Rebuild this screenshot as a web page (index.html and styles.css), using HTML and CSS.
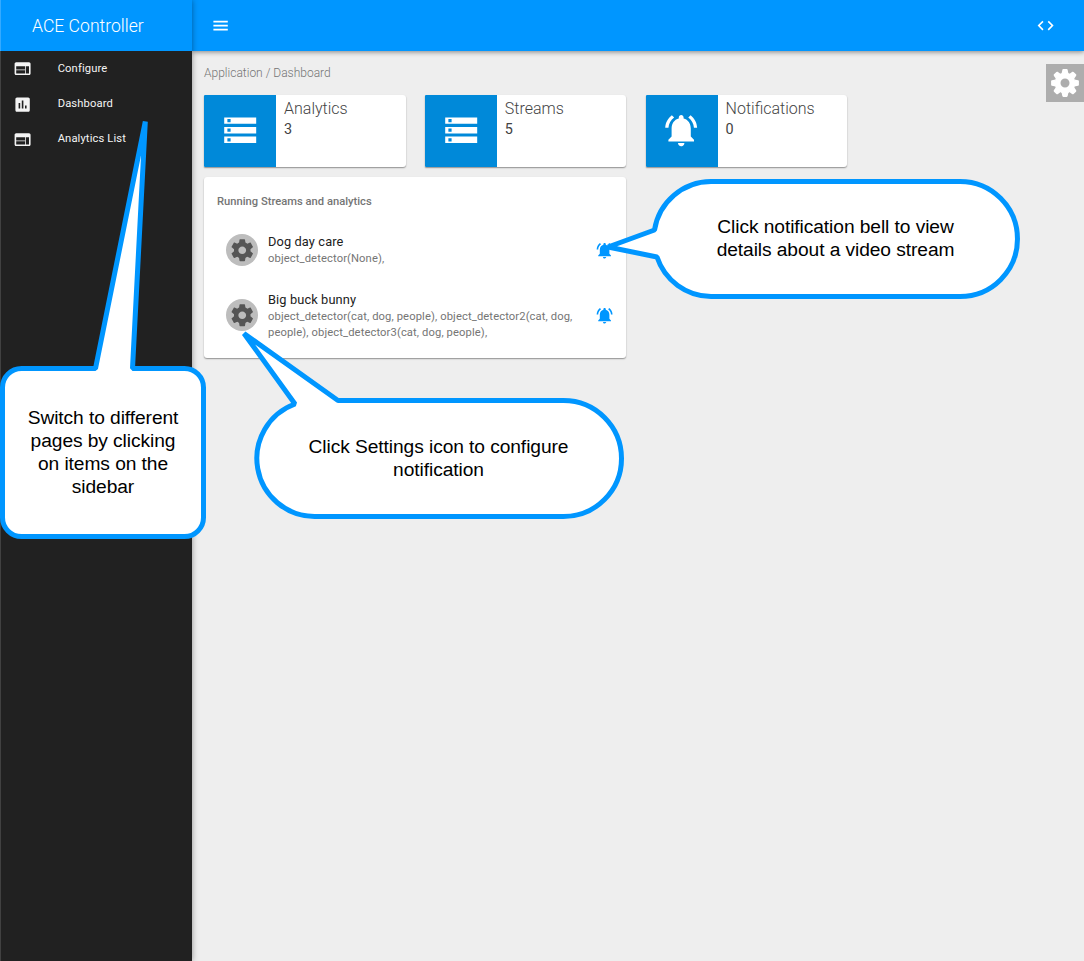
FILE: index.html
```
<!DOCTYPE html>
<html lang="en">
<head>
<meta charset="utf-8">
<title>ACE Controller</title>
<link rel="stylesheet" href="styles.css">
</head>
<body>
<svg class="defs" aria-hidden="true">
  <symbol id="web" viewBox="0 0 24 24"><path d="M20 4H4c-1.1 0-1.99.9-1.99 2L2 18c0 1.1.9 2 2 2h16c1.1 0 2-.9 2-2V6c0-1.100-.9-2-2-2zm-5 14H4v-4h11v4zm0-5H4V9h11v4zm5 5h-4V9h4v9z"/></symbol>
  <symbol id="chart" viewBox="0 0 24 24"><path d="M19 3H5c-1.100 0-2 .9-2 2v14c0 1.100.9 2 2 2h14c1.100 0 2-.9 2-2V5c0-1.100-.9-2-2-2zM9 17H7v-7h2v7zm4 0h-2V7h2v10zm4 0h-2v-4h2v4z"/></symbol>
  <symbol id="menu" viewBox="0 0 24 24"><path d="M3 18h18v-2H3v2zm0-5h18v-2H3v2zm0-7v2h18V6H3z"/></symbol>
  <symbol id="code" viewBox="0 0 24 24"><path d="M9.400 16.600 4.800 12l4.600-4.600L8 6l-6 6 6 6 1.400-1.400zm5.200 0 4.600-4.600-4.600-4.600L16 6l6 6-6 6-1.400-1.400z"/></symbol>
  <symbol id="storage" viewBox="0 0 24 24"><path d="M2 20h20v-4H2v4zm2-3h2v2H4v-2zM2 4v4h20V4H2zm4 3H4V5h2v2zm-4 7h20v-4H2v4zm2-3h2v2H4v-2z"/></symbol>
  <symbol id="bell" viewBox="0 0 24 24"><path d="M7.580 4.080 6.150 2.650C3.750 4.480 2.170 7.300 2.030 10.500h2c.15-2.650 1.510-4.970 3.550-6.420zm12.390 6.420h2c-.15-3.200-1.730-6.020-4.120-7.850l-1.420 1.430c2.020 1.450 3.390 3.770 3.540 6.420zM18 11c0-3.070-1.640-5.640-4.500-6.320V4c0-.83-.67-1.500-1.500-1.500s-1.500.67-1.500 1.500v.68C7.630 5.360 6 7.920 6 11v5l-2 2v1h16v-1l-2-2v-5zm-6 11c.14 0 .27-.01.4-.04.65-.14 1.180-.58 1.440-1.180.1-.24.15-.5.15-.78h-4c.01 1.100.9 2 2.010 2z"/></symbol>
  <symbol id="cog" viewBox="0 0 24 24"><path d="M19.430 12.980c.04-.32.07-.64.07-.98s-.03-.66-.07-.98l2.110-1.650c.19-.15.24-.42.12-.64l-2-3.460c-.12-.22-.39-.3-.61-.22l-2.490 1c-.52-.4-1.080-.73-1.690-.98l-.38-2.650C14.460 2.180 14.250 2 14 2h-4c-.25 0-.46.18-.49.42l-.38 2.650c-.61.25-1.170.59-1.690.98l-2.490-1c-.23-.09-.49 0-.61.22l-2 3.460c-.13.22-.07.49.12.64l2.110 1.650c-.04.32-.07.65-.07.98s.03.66.07.98l-2.110 1.650c-.19.15-.24.42-.12.64l2 3.460c.12.22.39.3.61.22l2.490-1c.52.4 1.080.73 1.690.98l.38 2.650c.03.24.24.42.49.42h4c.25 0 .46-.18.49-.42l.38-2.650c.61-.25 1.170-.59 1.690-.98l2.490 1c.23.09.49 0 .61-.22l2-3.460c.12-.22.07-.49-.12-.64l-2.110-1.650zM12 15.500c-1.930 0-3.500-1.570-3.500-3.500s1.570-3.500 3.500-3.500 3.500 1.570 3.500 3.500-1.570 3.500-3.500 3.500z"/></symbol>
  <symbol id="gear" viewBox="-14 -14 28 28">
    <circle r="7.450" fill="none" stroke="currentColor" stroke-width="5.900"/>
    <g id="teeth">
      <path id="tooth" d="M-3.400-9.500-2.700-13.100Q-2.500-13.900-1.700-13.900H1.700Q2.500-13.900 2.700-13.100L3.400-9.500z"/>
      <use href="#tooth" transform="rotate(45)"/><use href="#tooth" transform="rotate(90)"/><use href="#tooth" transform="rotate(135)"/>
      <use href="#tooth" transform="rotate(180)"/><use href="#tooth" transform="rotate(225)"/><use href="#tooth" transform="rotate(270)"/><use href="#tooth" transform="rotate(315)"/>
    </g>
  </symbol>
</svg>

<div class="app">
  <aside class="sidebar">
    <div class="brand"><span>ACE Controller</span></div>
    <nav class="nav">
      <a class="nav-item"><svg><use href="#web"/></svg><span>Configure</span></a>
      <a class="nav-item"><svg><use href="#chart"/></svg><span>Dashboard</span></a>
      <a class="nav-item"><svg><use href="#web"/></svg><span>Analytics List</span></a>
    </nav>
  </aside>
  <div class="page">
    <header class="toolbar">
      <svg class="icon-menu"><use href="#menu"/></svg>
      <svg class="icon-code"><use href="#code"/></svg>
    </header>
    <main class="content">
      <div class="crumb"><span>Application / Dashboard</span></div>
      <section class="stats">
        <article class="stat"><div class="tile"><svg><use href="#storage"/></svg></div><div class="stat-body"><h2><span>Analytics</span></h2><p>3</p></div></article>
        <article class="stat"><div class="tile"><svg><use href="#storage"/></svg></div><div class="stat-body"><h2><span>Streams</span></h2><p>5</p></div></article>
        <article class="stat"><div class="tile"><svg><use href="#bell"/></svg></div><div class="stat-body"><h2><span>Notifications</span></h2><p>0</p></div></article>
      </section>
      <section class="streams">
        <h3><span>Running Streams and analytics</span></h3>
        <div class="stream one">
          <div class="avatar"><svg><use href="#cog"/></svg></div>
          <div class="stream-text"><h4><span>Dog day care</span></h4><p><span>object_detector(None),</span></p></div>
          <svg class="alert"><use href="#bell"/></svg>
        </div>
        <div class="stream two">
          <div class="avatar"><svg><use href="#cog"/></svg></div>
          <div class="stream-text"><h4><span>Big buck bunny</span></h4><p><span>object_detector(cat, dog, people), object_detector2(cat, dog,</span><br><span>people), object_detector3(cat, dog, people),</span></p></div>
          <svg class="alert"><use href="#bell"/></svg>
        </div>
      </section>
    </main>
  </div>
</div>

<div class="settings"><svg><use href="#gear"/></svg></div>
<i class="speck"></i>

<svg class="callouts" viewBox="0 0 1084 961">
  <path d="M21.500 368.500H95.500L145.300 121.500 132.500 368.500H184.500A19 19 0 0 1 203.500 387.500V517.500A19 19 0 0 1 184.500 536.500H21.500A19 19 0 0 1 2.500 517.500V387.500A19 19 0 0 1 21.500 368.500Z"/>
  <path d="M295 404 244 333.500 338 400.500H563.500A58 58 0 0 1 563.500 516.500H314.500A58 58 0 0 1 295 404Z"/>
  <path d="M654.500 230 608 247 657 257A57.500 57.500 0 0 0 711 296.500H960A57.500 57.500 0 0 0 960 181.500H711A57.500 57.500 0 0 0 654.500 230Z"/>
</svg>
<p class="note note-sidebar">Switch to different<br>pages by clicking<br>on items on the<br>sidebar</p>
<p class="note note-settings">Click Settings icon to configure<br>notification</p>
<p class="note note-bell">Click notification bell to view<br>details about a video stream</p>
</body>
</html>
```
FILE: styles.css
```
* { box-sizing: border-box; }
body { margin: 0; font-family: Roboto, sans-serif; background: #eee; overflow: hidden; }
h2, h3, h4, p { margin: 0; font-weight: 400; }
svg { display: block; fill: currentColor; flex: none; }
.defs { position: absolute; width: 0; height: 0; }
.app { display: flex; height: 961px; }
.sidebar { width: 192px; background: #212121; color: #fff; border-left: 1px solid #414141; box-shadow: 0 0 6px rgba(0,0,0,.4); z-index: 2; flex: none; }
.brand { height: 51px; margin-left: -1px; border-left: 1px solid #35aaff; background: #0096ff; display: flex; align-items: center; padding-left: 31px; font-size: 17.6px; font-weight: 300; }
.nav { display: flex; flex-direction: column; }
.nav-item { height: 35px; display: flex; align-items: center; padding-left: 12px; gap: 25.500px; font-size: 11.2px; letter-spacing: .12px; color: #f4f4f4; }
.nav-item svg { width: 19.200px; height: 19.200px; margin-top: 1px; }
.nav-item:nth-child(n+2) svg { margin-top: 2.200px; }
.page { flex: 1; display: flex; flex-direction: column; }
.toolbar { height: 51px; background: #0096ff; color: #fff; display: flex; align-items: center; justify-content: space-between; padding: 0 29px 0 19px; box-shadow: 0 1px 5px rgba(0,0,0,.45); z-index: 1; }
.icon-menu, .icon-code { width: 19.200px; height: 19.200px; }
.content { padding: 13px 12px; }
.crumb { font-size: 12px; font-weight: 300; line-height: 18px; color: #757575; height: 31px; }
.stats { display: grid; grid-template-columns: repeat(3, 201.600px); column-gap: 19.200px; }
.stat { height: 72px; display: flex; background: #fff; border-radius: 1px 3px 3px 1px; box-shadow: 0 1px 1.500px rgba(0,0,0,.4); overflow: hidden; }
.tile { width: 72px; background: #0089d9; color: #fff; display: flex; align-items: center; justify-content: center; padding-bottom: 2px; }
.tile svg { width: 38.400px; height: 38.400px; }
.stat-body { padding: 4px 8px; }
.stat h2 { font-size: 16px; font-weight: 300; line-height: 20px; color: #444; }
.stat p { font-size: 14.400px; line-height: 21px; color: #424242; }
.streams { width: 422px; height: 181px; margin-top: 10px; background: #fff; border-radius: 3px; box-shadow: 0 1px 1.500px rgba(0,0,0,.4); padding: 17px 12px 0 13px; }
.streams h3 { font-size: 11.200px; font-weight: 500; line-height: 16px; color: #757575; }
.stream { display: flex; align-items: center; padding-left: 9px; }
.one { height: 50px; margin-top: 15px; }
.two { height: 66px; margin-top: 7px; }
.avatar { width: 32px; height: 32px; border-radius: 50%; background: #bdbdbd; color: #555; display: flex; align-items: center; justify-content: center; margin-right: 10px; }
.avatar svg { width: 26.500px; height: 26.500px; }
.stream-text { flex: 1; letter-spacing: .12px; }
.stream h4 { font-size: 12.800px; line-height: 17px; color: #212121; }
.one h4 { line-height: 16px; }
.stream p { font-size: 11.200px; line-height: 16px; color: #757575; white-space: nowrap; }
.one p { padding-top: 1px; }
.two p { padding-top: 1px; }
.two h4 { padding-top: 1px; }
.alert { width: 19.200px; height: 19.200px; margin-top: 1px; color: #0096ff; }
.settings { position: absolute; left: 1046px; top: 64px; width: 38px; height: 38px; background: #adadad; color: #fff; display: flex; align-items: center; justify-content: center; padding-right: 1px; }
.settings svg { width: 28px; height: 28px; }
.speck { position: absolute; left: 852px; top: 0; width: 3px; height: 1px; background: #dfe4e8; }
.callouts { position: absolute; left: 0; top: 0; width: 1084px; height: 961px; z-index: 5; fill: #fff; stroke: #0096ff; stroke-width: 5; stroke-linejoin: bevel; }
.note { position: absolute; z-index: 6; font-family: "Liberation Sans", Arial, sans-serif; font-size: 19.200px; letter-spacing: -.08px; line-height: 23px; color: #000; text-align: center; white-space: nowrap; }
.note-sidebar { left: 3px; top: 406px; width: 200px; }
.note-settings { left: 257px; top: 435px; width: 363px; }
.note-bell { left: 654px; top: 215px; width: 363px; }
```
